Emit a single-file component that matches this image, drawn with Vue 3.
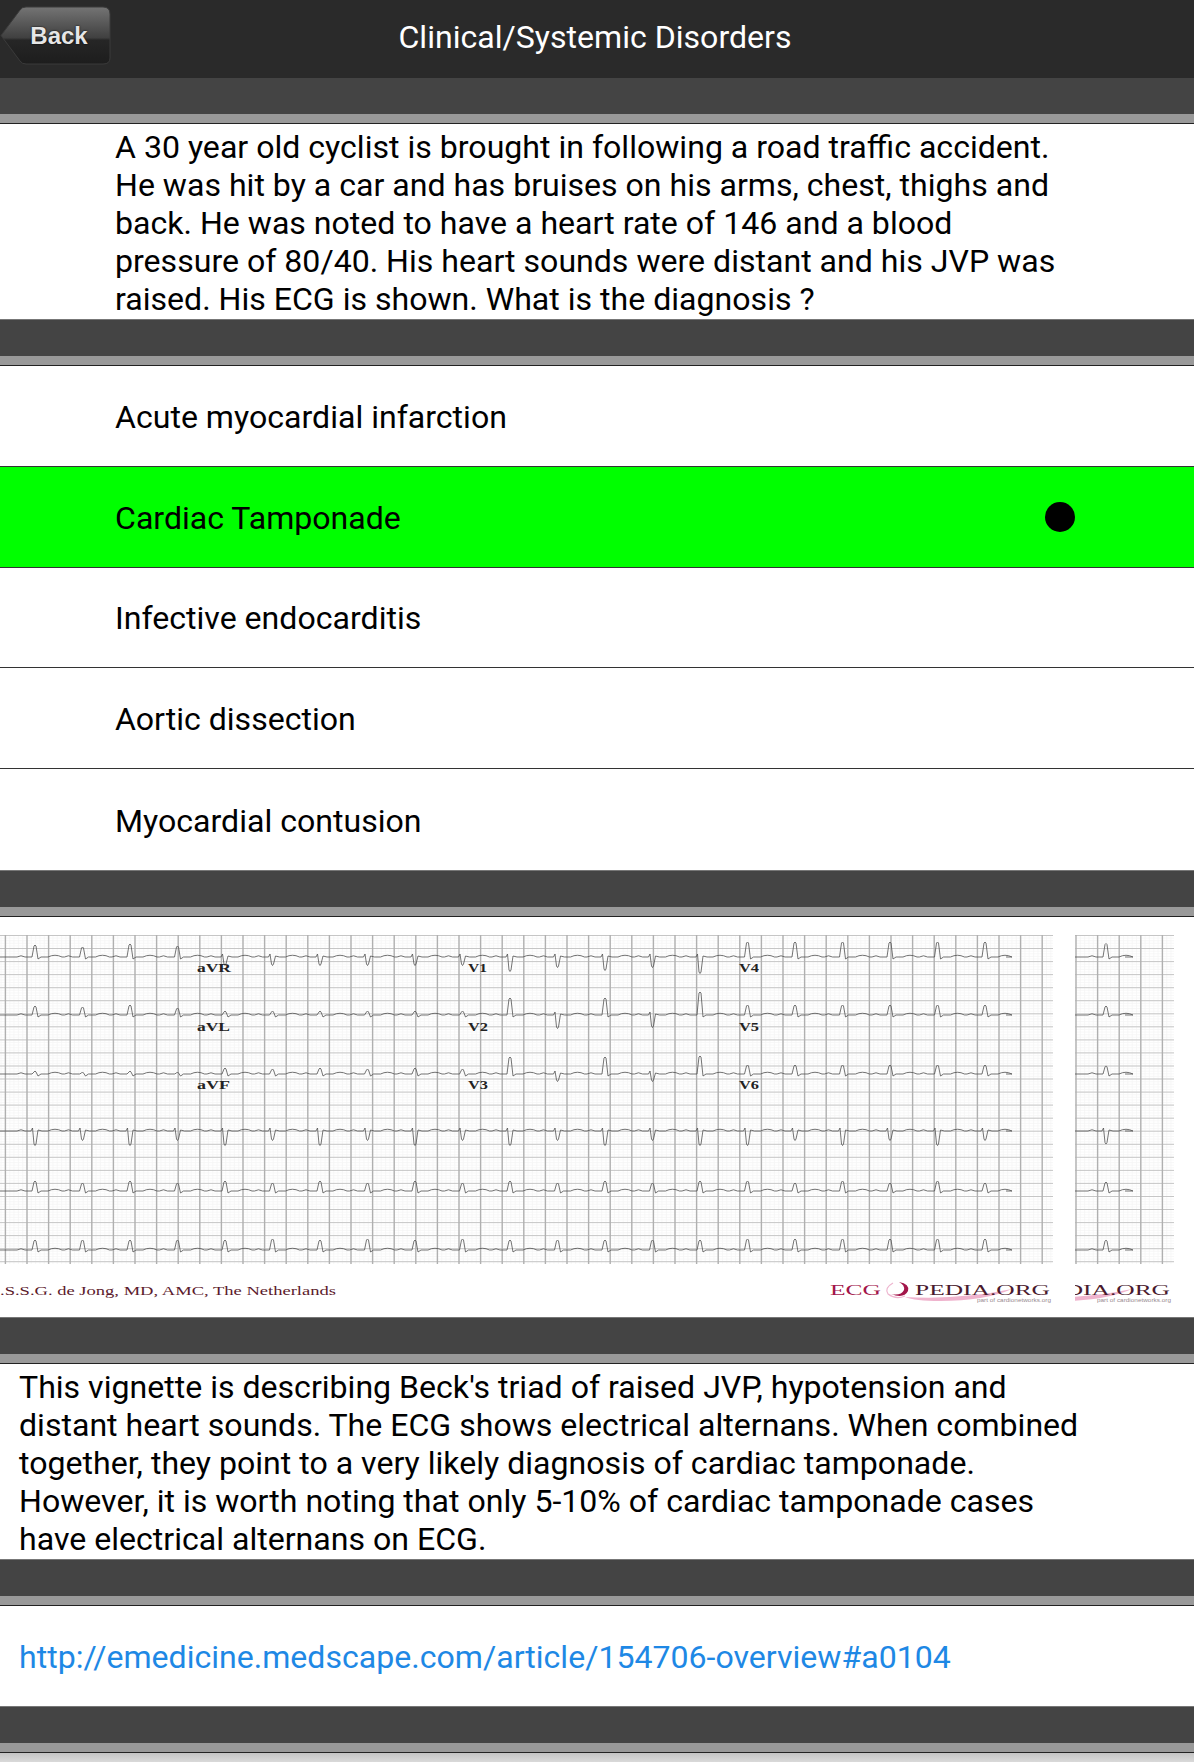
<template>
  <div class="page">
    <header class="topbar">
      <button class="back">
        <svg class="back-shape" width="112" height="60" viewBox="0 0 112 60">
          <defs>
            <linearGradient id="backFill" x1="0" y1="0" x2="0" y2="1">
              <stop offset="0" stop-color="#747474" />
              <stop offset="0.54" stop-color="#404040" />
              <stop offset="0.58" stop-color="#262626" />
              <stop offset="1" stop-color="#1d1d1d" />
            </linearGradient>
          </defs>
          <path
            d="M1 29.5 L20 4 Q22 1 26 1 L103 1 Q110 1 110 8 L110 52 Q110 58 103 58 L26 58 Q22 58 20 55 Z"
            fill="url(#backFill)"
            stroke="#3a3a3a"
          />
        </svg>
        <span class="back-label">Back</span>
      </button>
      <h1 class="title">Clinical/Systemic Disorders</h1>
      <span></span>
    </header>

    <div class="sep sep-first"><div class="sep-light"></div></div>

    <p class="copy question">
      A 30 year old cyclist is brought in following a road traffic accident. He was hit by a car and has bruises on his arms, chest, thighs and back. He was noted to have a heart rate of 146 and a blood pressure of 80/40. His heart sounds were distant and his JVP was raised. His ECG is shown. What is the diagnosis ?
    </p>

    <div class="sep"><div class="sep-light"></div></div>

    <ul class="options">
      <li
        v-for="opt in options"
        :key="opt.text"
        class="option"
        :class="{ correct: opt.correct }"
      >
        <span class="option-text">{{ opt.text }}</span>
        <i v-if="opt.correct" class="dot"></i>
      </li>
    </ul>

    <div class="sep"><div class="sep-light"></div></div>

    <div class="ecg">
      <svg width="1194" height="400" viewBox="0 917 1194 400">
        <path :d="fineGrid" stroke="#f5f5f5" stroke-width="0.7" fill="none" />
        <path :d="majorH" stroke="#c6c6c6" stroke-width="1" fill="none" />
        <path :d="majorV" stroke="#b0b0b0" stroke-width="1.4" fill="none" />
        <path :d="traces" stroke="#505050" stroke-width="0.8" fill="none" stroke-linejoin="round" />

        <g class="lead">
          <text
            v-for="l in leads"
            :key="l.t"
            :x="l.x"
            :y="l.y"
            :textLength="l.w"
            lengthAdjust="spacingAndGlyphs"
          >{{ l.t }}</text>
        </g>

        <text class="credit" x="0" y="1295" textLength="336" lengthAdjust="spacingAndGlyphs">.S.S.G. de Jong, MD, AMC, The Netherlands</text>

        <path d="M905 1297 Q960 1300 1012 1289 Q985 1301 940 1301 Q915 1301 905 1297 Z" fill="#efb3cd" />
        <path d="M893 1283 Q884 1288 888 1294 Q896 1300 905 1296" stroke="#eeb5cf" fill="none" stroke-width="1.2" />
        <path d="M899 1282 Q910 1284 908 1291 Q904 1299 891 1294 Q901 1296 904 1290 Q905 1285 899 1282 Z" fill="#a3154a" />
        <text class="logo logo-a" x="830" y="1295" textLength="51" lengthAdjust="spacingAndGlyphs">ECG</text>
        <text class="logo logo-b" x="915" y="1295" textLength="135" lengthAdjust="spacingAndGlyphs">PEDIA.ORG</text>
        <text class="part" x="977" y="1302" textLength="74" lengthAdjust="spacingAndGlyphs">part of cardionetworks.org</text>

        <svg x="1075" y="917" width="100" height="400" viewBox="1075 917 100 400">
          <path d="M1025 1297 Q1080 1300 1132 1289 Q1105 1301 1060 1301 Q1035 1301 1025 1297 Z" fill="#efb3cd" />
          <text class="logo logo-b" x="1035" y="1295" textLength="135" lengthAdjust="spacingAndGlyphs">PEDIA.ORG</text>
        </svg>
        <text class="part" x="1097" y="1302" textLength="74" lengthAdjust="spacingAndGlyphs">part of cardionetworks.org</text>
      </svg>
    </div>

    <div class="sep"><div class="sep-light"></div></div>

    <p class="copy explain">
      This vignette is describing Beck's triad of raised JVP, hypotension and distant heart sounds. The ECG shows electrical alternans. When combined together, they point to a very likely diagnosis of cardiac tamponade. However, it is worth noting that only 5-10% of cardiac tamponade cases have electrical alternans on ECG.
    </p>

    <div class="sep"><div class="sep-light"></div></div>

    <div class="link-row">
      <a class="link" href="#">http://emedicine.medscape.com/article/154706-overview#a0104</a>
    </div>

    <div class="sep"><div class="sep-light"></div></div>
    <div class="bottom"></div>
  </div>
</template>

<script setup>
const options = [
  { text: 'Acute myocardial infarction' },
  { text: 'Cardiac Tamponade', correct: true },
  { text: 'Infective endocarditis' },
  { text: 'Aortic dissection' },
  { text: 'Myocardial contusion' },
]

const leads = [
  { t: 'aVR', x: 197, y: 972, w: 34 },
  { t: 'aVL', x: 197, y: 1031, w: 33 },
  { t: 'aVF', x: 197, y: 1089, w: 33 },
  { t: 'V1', x: 468, y: 972, w: 19 },
  { t: 'V2', x: 468, y: 1031, w: 20 },
  { t: 'V3', x: 468, y: 1089, w: 20 },
  { t: 'V4', x: 739, y: 972, w: 20 },
  { t: 'V5', x: 739, y: 1031, w: 20 },
  { t: 'V6', x: 739, y: 1089, w: 20 },
]

const TOP = 935
const BOTTOM = 1264
const spans = [
  { from: 0, to: 1053, start: 5.4 },
  { from: 1075, to: 1174, start: 1076 },
]

function buildGrid(step, offsetOf) {
  let v = ''
  for (const s of spans) {
    for (let x = offsetOf(s); x <= s.to; x += step) {
      if (x >= s.from) v += `M${x.toFixed(1)} ${TOP}V${BOTTOM}`
    }
  }
  return v
}

function buildRows(step) {
  let h = ''
  for (const s of spans) {
    for (let y = TOP + 0.5; y <= BOTTOM; y += step) {
      h += `M${s.from} ${y.toFixed(1)}H${s.to}`
    }
  }
  return h
}

const majorV = buildGrid(21.6, (s) => s.start)
const majorH = buildRows(13.05)
const fineGrid = buildGrid(4.32, (s) => s.start - 4.32) + buildRows(2.61)

// QRS size per row, one list per lead column, repeated over that column's beats
const baselines = [957, 1015, 1074, 1131, 1191, 1250]
const amps = [
  [[12, 10, 13, 11], [-9, -9], [-15, -11, -14, -11, -17], [15, 15]],
  [[9, 8, 10, 7], [4, 4], [17, -14, 17, -13, 23], [10, 10]],
  [[3, 2], [6, 5], [17, -8, 17, -8, 18], [9, 9]],
  [[-15, -10], [-15, -10], [-15, -10], [-15, -10]],
  [[10, 8], [10, 8], [10, 8], [10, 8]],
  [[10, 10], [10, 11], [10, 10], [11, 11]],
]
const columnStart = [0, 4, 10, 15]

function columnOf(n) {
  if (n < 4) return 0
  if (n < 10) return 1
  if (n < 15) return 2
  return 3
}

function beat(x, y, amp) {
  let qrs
  if (amp > 0) {
    qrs =
      `L${x - 3} ${y}L${x - 1} ${y - amp + 1}Q${x} ${y - amp - 1} ${x + 1} ${y - amp + 1}` +
      `L${x + 3} ${y + 2}L${x + 6} ${y}`
  } else {
    qrs =
      `L${x - 4} ${y}L${x - 2.5} ${y - 3}L${x - 1} ${y - amp - 2}Q${x} ${y - amp + 1} ${x + 1} ${y - amp - 2}` +
      `L${x + 3} ${y - 1}L${x + 7} ${y}`
  }
  return (
    `L${x - 18} ${y}Q${x - 14} ${y - 2.5} ${x - 10} ${y}` +
    qrs +
    `L${x + 13} ${y}Q${x + 20} ${y - 3.5} ${x + 27} ${y}`
  )
}

function buildTraces() {
  let d = ''
  baselines.forEach((y, row) => {
    d += `M0 ${y}`
    for (let n = 0; n <= 20; n++) {
      const x = 35 + 47.5 * n
      const col = columnOf(n)
      const list = amps[row][col]
      d += beat(x, y, list[(n - columnStart[col]) % list.length])
    }
    d += `L1006 ${y}`
    d += `M1075 ${y}L1087 ${y}`
    d += beat(1106, y, amps[row][3][0] * 0.9)
    d += `L1125 ${y}`
  })
  return d
}

const traces = buildTraces()
</script>

<style scoped>
.page {
  width: 1194px;
  height: 1762px;
  overflow: hidden;
  background: #fff;
  font-family: Roboto, sans-serif;
  color: #000;
}

.topbar {
  height: 78px;
  background: #2a2a2a;
  display: grid;
  grid-template-columns: 1fr auto 1fr;
  align-items: center;
}

.back {
  position: relative;
  width: 112px;
  height: 60px;
  margin: -6px 0 0;
  padding: 0 0 0 6px;
  border: 0;
  background: none;
  justify-self: start;
}

.back-shape {
  position: absolute;
  left: 0;
  top: 0;
}

.back-label {
  position: relative;
  font-family: "Liberation Sans", Arial, sans-serif;
  font-weight: 700;
  font-size: 24px;
  color: #e6e6e6;
  text-shadow: 0 0 2px #000;
}

.title {
  margin: 0 4px 4px 0;
  font-size: 32.1px;
  font-weight: 400;
  color: #fff;
}

.sep {
  height: 47px;
  box-sizing: border-box;
  background: #444;
  border-top: 1px solid #777;
  border-bottom: 1px solid #222;
  display: flex;
  flex-direction: column;
  justify-content: flex-end;
}

.sep-first {
  height: 46px;
  border-top: 0;
}

.sep-light {
  height: 9px;
  background: #999;
}

.copy {
  margin: 0;
  font-size: 32.1px;
  line-height: 38px;
  height: 195px;
  box-sizing: border-box;
  padding-top: 4px;
}

.question {
  padding-left: 115px;
  padding-right: 130px;
}

.explain {
  padding-left: 19px;
  padding-right: 100px;
}

.options {
  margin: 0;
  padding: 0;
  list-style: none;
}

.option {
  height: 100.8px;
  box-sizing: border-box;
  padding: 0 119px 0 115px;
  display: flex;
  align-items: center;
  justify-content: space-between;
  font-size: 32.1px;
  border-bottom: 1px solid #333;
}

.option:last-child {
  border-bottom: 0;
}

.option-text {
  padding-top: 2px;
}

.correct {
  background: #0f0;
}

.dot {
  width: 30px;
  height: 30px;
  border-radius: 50%;
  background: #000;
}

.ecg {
  height: 400px;
  background: #fff;
}

.ecg svg {
  display: block;
}

.lead text {
  font-family: "Liberation Serif", serif;
  font-weight: 700;
  font-size: 13px;
  fill: #222;
}

.credit {
  font-family: "Liberation Serif", serif;
  font-size: 12px;
  fill: #5c1a2c;
}

.logo {
  font-family: "Liberation Serif", serif;
  font-size: 15px;
}

.logo-a {
  fill: #a3154a;
}

.logo-b {
  fill: #4a1a2e;
}

.part {
  font-family: "Liberation Sans", sans-serif;
  font-size: 6px;
  fill: #998a90;
}

.link-row {
  height: 100px;
  display: flex;
  align-items: center;
  padding: 2px 0 0 19px;
  box-sizing: border-box;
}

.link {
  font-size: 32.1px;
  color: #1e88e5;
  text-decoration: none;
}

.bottom {
  height: 10px;
  background: linear-gradient(#c4c4c4, #dcdcdc);
}
</style>
